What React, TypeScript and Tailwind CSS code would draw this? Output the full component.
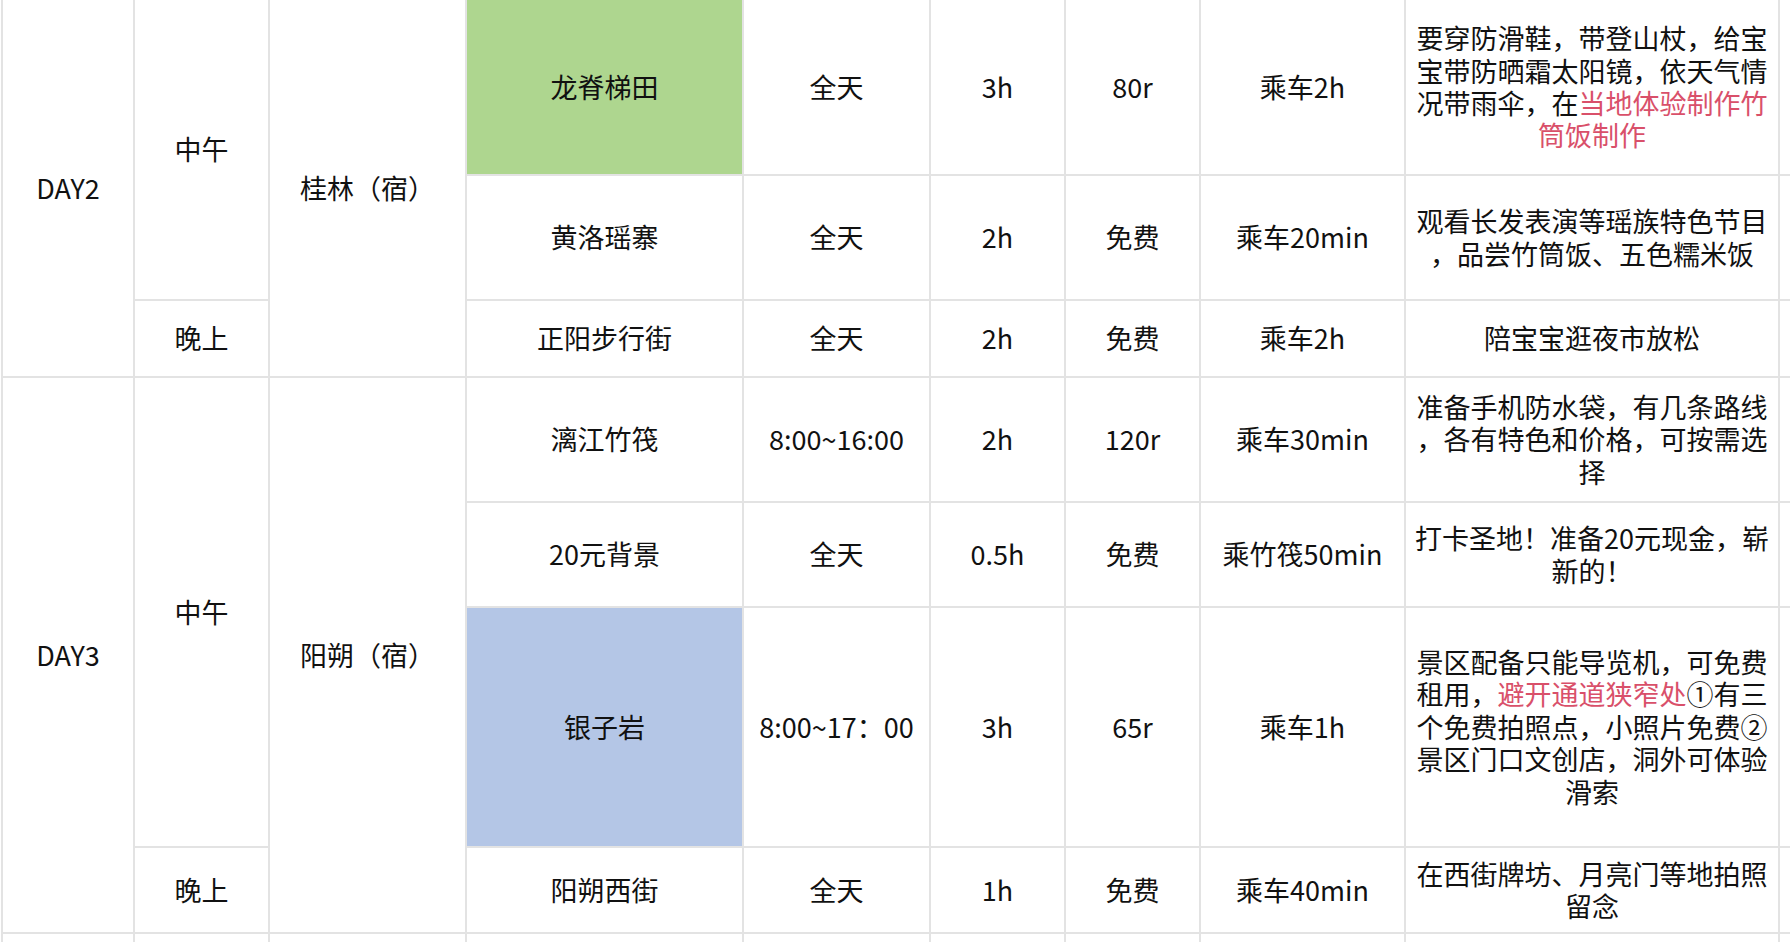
import React from "react";

type Seg = { t: string; red?: boolean };
type Note = Seg[][];

const FONT = { fontFamily: '"Noto Sans CJK SC", "Noto Sans", sans-serif' };

function Cell({
  pos,
  bg = "bg-white",
  children,
}: {
  pos: string;
  bg?: string;
  children?: React.ReactNode;
}) {
  return (
    <div className={`${pos} ${bg} flex items-center justify-center text-center`}>
      {children}
    </div>
  );
}

function NoteText({ note }: { note: Note }) {
  return (
    <div className="flex flex-col items-center">
      {note.map((line, i) => (
        <div key={i} className="whitespace-nowrap">
          {line.map((s, j) => (
            <span key={j} className={s.red ? "text-[#d9506a]" : ""}>
              {s.t}
            </span>
          ))}
        </div>
      ))}
    </div>
  );
}

type Row = {
  r: string;
  place: string;
  placeBg?: string;
  time: string;
  dur: string;
  price: string;
  trans: string;
  note: Note;
};

const rowPos = [
  "row-start-1",
  "row-start-2",
  "row-start-3",
  "row-start-4",
  "row-start-5",
  "row-start-6",
  "row-start-7",
];

const rows: Row[] = [
  {
    r: rowPos[0],
    place: "龙脊梯田",
    placeBg: "bg-[#aed68f]",
    time: "全天",
    dur: "3h",
    price: "80r",
    trans: "乘车2h",
    note: [
      [{ t: "要穿防滑鞋，带登山杖，给宝" }],
      [{ t: "宝带防晒霜太阳镜，依天气情" }],
      [{ t: "况带雨伞，在" }, { t: "当地体验制作竹", red: true }],
      [{ t: "筒饭制作", red: true }],
    ],
  },
  {
    r: rowPos[1],
    place: "黄洛瑶寨",
    time: "全天",
    dur: "2h",
    price: "免费",
    trans: "乘车20min",
    note: [[{ t: "观看长发表演等瑶族特色节目" }], [{ t: "，品尝竹筒饭、五色糯米饭" }]],
  },
  {
    r: rowPos[2],
    place: "正阳步行街",
    time: "全天",
    dur: "2h",
    price: "免费",
    trans: "乘车2h",
    note: [[{ t: "陪宝宝逛夜市放松" }]],
  },
  {
    r: rowPos[3],
    place: "漓江竹筏",
    time: "8:00~16:00",
    dur: "2h",
    price: "120r",
    trans: "乘车30min",
    note: [
      [{ t: "准备手机防水袋，有几条路线" }],
      [{ t: "，各有特色和价格，可按需选" }],
      [{ t: "择" }],
    ],
  },
  {
    r: rowPos[4],
    place: "20元背景",
    time: "全天",
    dur: "0.5h",
    price: "免费",
    trans: "乘竹筏50min",
    note: [[{ t: "打卡圣地！准备20元现金，崭" }], [{ t: "新的！" }]],
  },
  {
    r: rowPos[5],
    place: "银子岩",
    placeBg: "bg-[#b4c6e6]",
    time: "8:00~17：00",
    dur: "3h",
    price: "65r",
    trans: "乘车1h",
    note: [
      [{ t: "景区配备只能导览机，可免费" }],
      [{ t: "租用，" }, { t: "避开通道狭窄处", red: true }, { t: "①有三" }],
      [{ t: "个免费拍照点，小照片免费②" }],
      [{ t: "景区门口文创店，洞外可体验" }],
      [{ t: "滑索" }],
    ],
  },
  {
    r: rowPos[6],
    place: "阳朔西街",
    time: "全天",
    dur: "1h",
    price: "免费",
    trans: "乘车40min",
    note: [[{ t: "在西街牌坊、月亮门等地拍照" }], [{ t: "留念" }]],
  },
];

export default function App() {
  return (
    <div
      className="w-[1790px] h-[942px] overflow-hidden bg-white text-[27px] leading-[32.4px] text-[#111]"
      style={FONT}
    >
      <div className="ml-[1px] pl-[2px] w-max bg-[#e3e3e3] grid gap-[2px] grid-cols-[130px_133px_195px_275px_185px_133px_133px_203px_372px_40px] grid-rows-[174px_123px_75px_123px_103px_238px_84px_60px]">
        <Cell pos="col-start-1 row-start-1 row-span-3">DAY2</Cell>
        <Cell pos="col-start-2 row-start-1 row-span-2">中午</Cell>
        <Cell pos="col-start-2 row-start-3">晚上</Cell>
        <Cell pos="col-start-3 row-start-1 row-span-3">桂林（宿）</Cell>

        <Cell pos="col-start-1 row-start-4 row-span-4">DAY3</Cell>
        <Cell pos="col-start-2 row-start-4 row-span-3">中午</Cell>
        <Cell pos="col-start-2 row-start-7">晚上</Cell>
        <Cell pos="col-start-3 row-start-4 row-span-4">阳朔（宿）</Cell>

        {rows.map((row, i) => (
          <React.Fragment key={i}>
            <Cell pos={`col-start-4 ${row.r}`} bg={row.placeBg ?? "bg-white"}>
              {row.place}
            </Cell>
            <Cell pos={`col-start-5 ${row.r}`}>{row.time}</Cell>
            <Cell pos={`col-start-6 ${row.r}`}>{row.dur}</Cell>
            <Cell pos={`col-start-7 ${row.r}`}>{row.price}</Cell>
            <Cell pos={`col-start-8 ${row.r}`}>{row.trans}</Cell>
            <Cell pos={`col-start-9 ${row.r}`}>
              <NoteText note={row.note} />
            </Cell>
            <Cell pos={`col-start-10 ${row.r}`} />
          </React.Fragment>
        ))}

        <Cell pos="col-start-1 row-start-8" />
        <Cell pos="col-start-2 row-start-8" />
        <Cell pos="col-start-3 row-start-8" />
        <Cell pos="col-start-4 row-start-8" />
        <Cell pos="col-start-5 row-start-8" />
        <Cell pos="col-start-6 row-start-8" />
        <Cell pos="col-start-7 row-start-8" />
        <Cell pos="col-start-8 row-start-8" />
        <Cell pos="col-start-9 row-start-8" />
        <Cell pos="col-start-10 row-start-8" />
      </div>
    </div>
  );
}
